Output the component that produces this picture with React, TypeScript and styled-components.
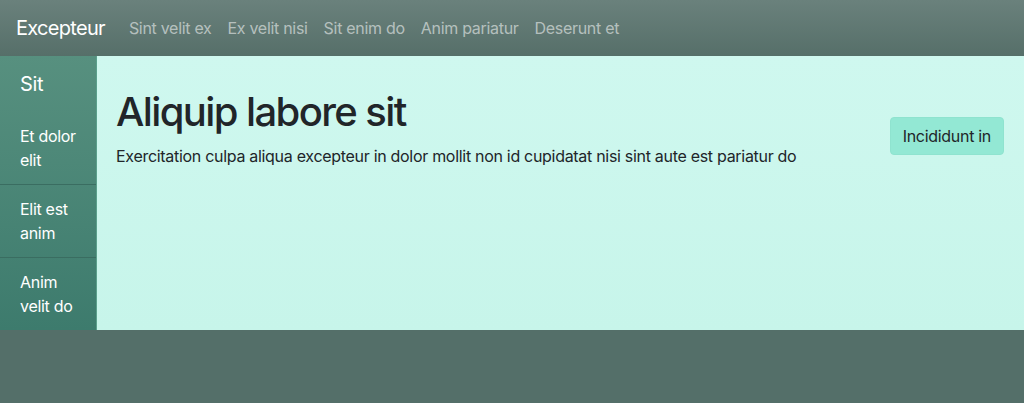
import React from "react";
import styled, { createGlobalStyle } from "styled-components";

const Global = createGlobalStyle`
  html, body { margin: 0; padding: 0; }
  body {
    background: #546f69;
    font-family: Inter, "Helvetica Neue", Arial, sans-serif;
    font-size: 16px;
    line-height: 1.5;
    letter-spacing: -0.3px;
    color: #212529;
  }
  * { box-sizing: border-box; }
`;

const Navbar = styled.nav`
  height: 56px;
  display: flex;
  align-items: center;
  padding: 0 16px;
  background: linear-gradient(180deg, #6a817c 0%, #566f69 100%);
`;

const Brand = styled.a`
  font-size: 20px;
  line-height: 30px;
  letter-spacing: -0.7px;
  color: #fff;
  margin-right: 24px;
  text-decoration: none;
`;

const NavLinks = styled.div`
  display: flex;
  gap: 16px;
`;

const NavLink = styled.a`
  font-size: 16px;
  color: rgba(255, 255, 255, 0.55);
  text-decoration: none;
`;

const Layout = styled.div`
  display: flex;
`;

const Sidebar = styled.aside`
  width: 97px;
  flex: none;
  background: linear-gradient(180deg, #57907f 0%, #3d7b6d 100%);
  border-right: 1px solid #5ba08c;
  color: #fff;
`;

const SideHeader = styled.div`
  font-size: 20px;
  line-height: 24px;
  letter-spacing: -0.4px;
  padding: 16px 20px;
`;

const SideItem = styled.div<{ $last?: boolean }>`
  padding: 12px 14px 12px 20px;
  line-height: 24px;
  font-size: 16px;
  border-bottom: ${(p) => (p.$last ? "none" : "1px solid #3a6d61")};
`;

const Main = styled.main`
  flex: 1;
  background: linear-gradient(180deg, #cff8ef 0%, #c7f5ea 100%);
  padding: 32px 20px 0 19px;
`;

const HeaderRow = styled.div`
  display: flex;
  align-items: center;
  justify-content: space-between;
`;

const Title = styled.h1`
  margin: 0 0 8px;
  font-size: 40px;
  line-height: 48px;
  font-weight: 500;
  letter-spacing: -1.6px;
  color: #212529;
`;

const Lead = styled.p`
  margin: 0 0 16px;
  font-size: 16px;
  line-height: 24px;
`;

const Button = styled.button`
  font-family: inherit;
  font-size: 16px;
  line-height: 24px;
  letter-spacing: -0.3px;
  padding: 6px 12px;
  background: #93e8d4;
  border: 1px solid #8fe3cf;
  border-radius: 4px;
  color: #212529;
`;

export default function App() {
  return (
    <>
      <Global />
      <Navbar>
        <Brand>Excepteur</Brand>
        <NavLinks>
          <NavLink>Sint velit ex</NavLink>
          <NavLink>Ex velit nisi</NavLink>
          <NavLink>Sit enim do</NavLink>
          <NavLink>Anim pariatur</NavLink>
          <NavLink>Deserunt et</NavLink>
        </NavLinks>
      </Navbar>
      <Layout>
        <Sidebar>
          <SideHeader>Sit</SideHeader>
          <SideItem>Et dolor elit</SideItem>
          <SideItem>Elit est anim</SideItem>
          <SideItem $last>Anim velit do</SideItem>
        </Sidebar>
        <Main>
          <HeaderRow>
            <div>
              <Title>Aliquip labore sit</Title>
              <Lead>Exercitation culpa aliqua excepteur in dolor mollit non id cupidatat nisi sint aute est pariatur do</Lead>
            </div>
            <Button>Incididunt in</Button>
          </HeaderRow>
        </Main>
      </Layout>
    </>
  );
}
